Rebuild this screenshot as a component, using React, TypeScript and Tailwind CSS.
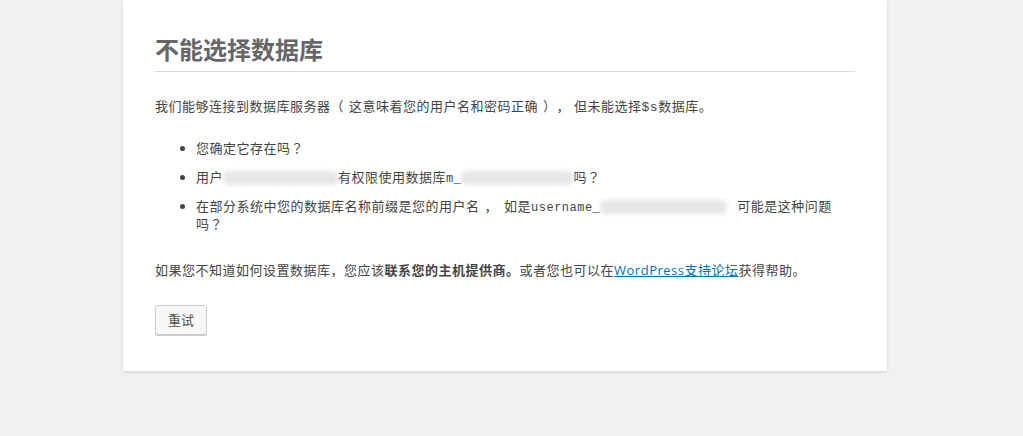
export default function App() {
  return (
    <div className="min-h-[436px] bg-[#f1f1f1] font-['Open_Sans','Noto_Sans_CJK_SC',sans-serif] text-[13px] text-[#444] [text-spacing-trim:space-all]">
      <div className="ml-[123px] w-[764px] bg-white px-8 pt-[35px] pb-[36px] shadow-[0_1px_3px_rgba(0,0,0,0.13)]">
        <h1 className="m-0 border-b border-[#dadada] pb-[6px] text-[24px] font-bold leading-[30px] text-[#666]">
          不能选择数据库
        </h1>

        <div className="tracking-[0.5px]">
          <p className="mt-[25px] mb-[22px] leading-[19.5px]">
            我们能够连接到数据库服务器（<Gap w="w-[5px]" />这意味着您的用户名和密码正确<Gap w="w-[5px]" />），
            <Gap w="w-[4px]" />但未能选择
            <code className="font-['Liberation_Mono',monospace] text-[13px] leading-none">$s</code>
            数据库。
          </p>

          <ul className="m-0 mb-[28px] list-disc pl-[41px] leading-[18px]">
            <li className="mb-[11px]">
              您确定它存在吗<Q />
            </li>
            <li className="mb-[11px]">
              用户
              <Redacted w="w-[115px]" />
              有权限使用数据库
              <code className="font-['Liberation_Mono',monospace] text-[12px] leading-none">m_</code>
              <Redacted w="w-[112px]" />
              吗<Q />
            </li>
            <li className="mb-[11px]">
              在部分系统中您的数据库名称前缀是您的用户名<Gap w="w-[5px]" />，<Gap w="w-[6px]" />如是
              <code className="font-['Liberation_Mono',monospace] text-[12px] leading-none">username_</code>
              <Redacted w="w-[127px]" />
              <Gap w="w-[10px]" />
              可能是这种问题
              <br />
              吗<Q />
            </li>
          </ul>

          <p className="m-0 leading-[19.5px]">
            如果您不知道如何设置数据库，您应该<strong className="font-bold">联系您的主机提供商。</strong>或者您也可以在
            <a href="#" className="text-[#0073aa] underline">
              WordPress支持论坛
            </a>
            获得帮助。
          </p>
        </div>

        <div className="mt-[25px]">
          <button className="h-[30px] rounded-[3px] border border-[#ccc] bg-[#f7f7f7] px-[12px] text-[13px] leading-[28px] text-[#555] shadow-[0_1px_0_#ccc]">
            重试
          </button>
        </div>
      </div>
    </div>
  );
}

// full-width question mark, centred in its cell as in the screenshot
function Q() {
  return <span className="font-['Noto_Sans_CJK_TC',sans-serif]">？</span>;
}

function Gap({ w }: { w: string }) {
  return <span className={`inline-block ${w}`} />;
}

function Redacted({ w }: { w: string }) {
  return (
    <span
      className={`inline-block h-[14px] ${w} rounded-[6px] bg-[#e6e6e6] align-middle blur-[2px]`}
    />
  );
}
